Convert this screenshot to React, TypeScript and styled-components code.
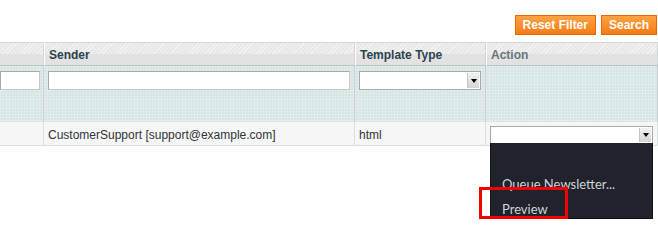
import React from "react";
import styled, { createGlobalStyle } from "styled-components";

const GlobalStyle = createGlobalStyle`
  html, body {
    margin: 0;
    padding: 0;
    background: #fff;
    font-family: "Liberation Sans", Arial, sans-serif;
    font-size: 12px;
    color: #2f2f2f;
  }
`;

const COLS = "44px 311px 131px 172px";

const Page = styled.div`
  width: 658px;
  height: 242px;
  overflow: hidden;
`;

const Toolbar = styled.div`
  height: 42px;
  display: flex;
  justify-content: flex-end;
  align-items: flex-start;
  gap: 5px;
  padding: 15px 1px 0 0;
  box-sizing: border-box;
`;

const OrangeButton = styled.button`
  height: 20px;
  padding: 0 7px;
  border: 1px solid #ed6502;
  background: linear-gradient(#fda243, #f77c16);
  color: #fff;
  font-family: "Liberation Sans", Arial, sans-serif;
  font-size: 12px;
  font-weight: bold;
  line-height: 18px;
  cursor: pointer;
`;

const Row = styled.div`
  display: grid;
  grid-template-columns: ${COLS};
`;

const HeadCell = styled.div<{ $muted?: boolean }>`
  height: 24px;
  border-top: 1px solid #d1d6d7;
  border-bottom: 1px solid #bbc4c6;
  border-left: 1px solid #fff;
  border-right: 1px solid #d1d6d7;
  box-sizing: border-box;
  padding: 5px 0 0 4px;
  font-weight: bold;
  font-size: 12px;
  color: ${(p) => (p.$muted ? "#67767e" : "#2d444f")};
  background:
    repeating-linear-gradient(135deg, #f3f3f3 0 1px, #e8e8e8 1px 3px) top / 100% 11px no-repeat,
    #e2e2e2;
  &:first-child { border-left: none; }
`;

const FilterCell = styled.div`
  height: 56px;
  box-sizing: border-box;
  border-right: 1px solid #c6cfd1;
  padding: 5px 4px 0 4px;
  background-color: #d6e4e6;
  background-image:
    linear-gradient(90deg, rgba(255,255,255,0.22) 1px, transparent 1px),
    linear-gradient(rgba(255,255,255,0.22) 1px, transparent 1px);
  background-size: 3px 3px;
  &:first-child { padding: 5px 3px 0 0; }
`;

const TextInput = styled.div`
  height: 19px;
  box-sizing: border-box;
  border: 1px solid #aaa;
  border-right-color: #c8c8c8;
  border-bottom-color: #c8c8c8;
  background: #fff;
`;

const SelectBox = styled.div<{ $h: number }>`
  height: ${(p) => p.$h}px;
  box-sizing: border-box;
  border: 1px solid #aaa;
  background: #fff;
  display: flex;
  justify-content: flex-end;
`;

const SelectArrow = styled.div`
  width: 11px;
  margin: 1px;
  background: linear-gradient(#f2f2f2, #d4d4d4);
  border-left: 1px solid #c4c4c4;
  display: flex;
  align-items: center;
  justify-content: center;
  &::after {
    content: "";
    border-left: 3px solid transparent;
    border-right: 3px solid transparent;
    border-top: 4px solid #000;
  }
`;

const DataCell = styled.div`
  height: 24px;
  box-sizing: border-box;
  border-right: 1px solid #dadfe0;
  border-bottom: 1px solid #dadfe0;
  background: #f6f6f6;
  padding: 2px 4px 0;
  font-size: 12px;
  line-height: 23px;
  color: #2f3439;
  position: relative;
`;

const ActionWrap = styled.div`
  position: relative;
  margin-top: 2px;
`;

const Menu = styled.div`
  position: absolute;
  left: 0;
  right: 0;
  top: 17px;
  height: 76px;
  box-sizing: border-box;
  background: #20232c;
  border: 1px solid #111;
  border-top: none;
  padding-top: 29px;
  font-family: Lato, "Noto Sans", sans-serif;
  font-size: 13px;
  color: #cfd2d8;
  z-index: 2;
`;

const MenuItem = styled.div`
  height: 25px;
  line-height: 25px;
  padding-left: 11px;
  white-space: nowrap;
`;

const Highlight = styled.div`
  position: absolute;
  left: -12px;
  top: 44px;
  width: 89px;
  height: 32px;
  box-sizing: border-box;
  border: 3px solid #f50000;
`;

export default function App() {
  return (
    <Page>
      <GlobalStyle />
      <Toolbar>
        <OrangeButton>Reset Filter</OrangeButton>
        <OrangeButton>Search</OrangeButton>
      </Toolbar>

      <Row>
        <HeadCell />
        <HeadCell>Sender</HeadCell>
        <HeadCell>Template Type</HeadCell>
        <HeadCell $muted>Action</HeadCell>
      </Row>

      <Row>
        <FilterCell>
          <TextInput />
        </FilterCell>
        <FilterCell>
          <TextInput />
        </FilterCell>
        <FilterCell>
          <SelectBox $h={19}>
            <SelectArrow />
          </SelectBox>
        </FilterCell>
        <FilterCell />
      </Row>

      <Row>
        <DataCell />
        <DataCell>CustomerSupport [support@example.com]</DataCell>
        <DataCell>html</DataCell>
        <DataCell>
          <ActionWrap>
            <SelectBox $h={18}>
              <SelectArrow />
            </SelectBox>
            <Menu>
              <MenuItem>Queue Newsletter...</MenuItem>
              <MenuItem>Preview</MenuItem>
              <Highlight />
            </Menu>
          </ActionWrap>
        </DataCell>
      </Row>
    </Page>
  );
}
